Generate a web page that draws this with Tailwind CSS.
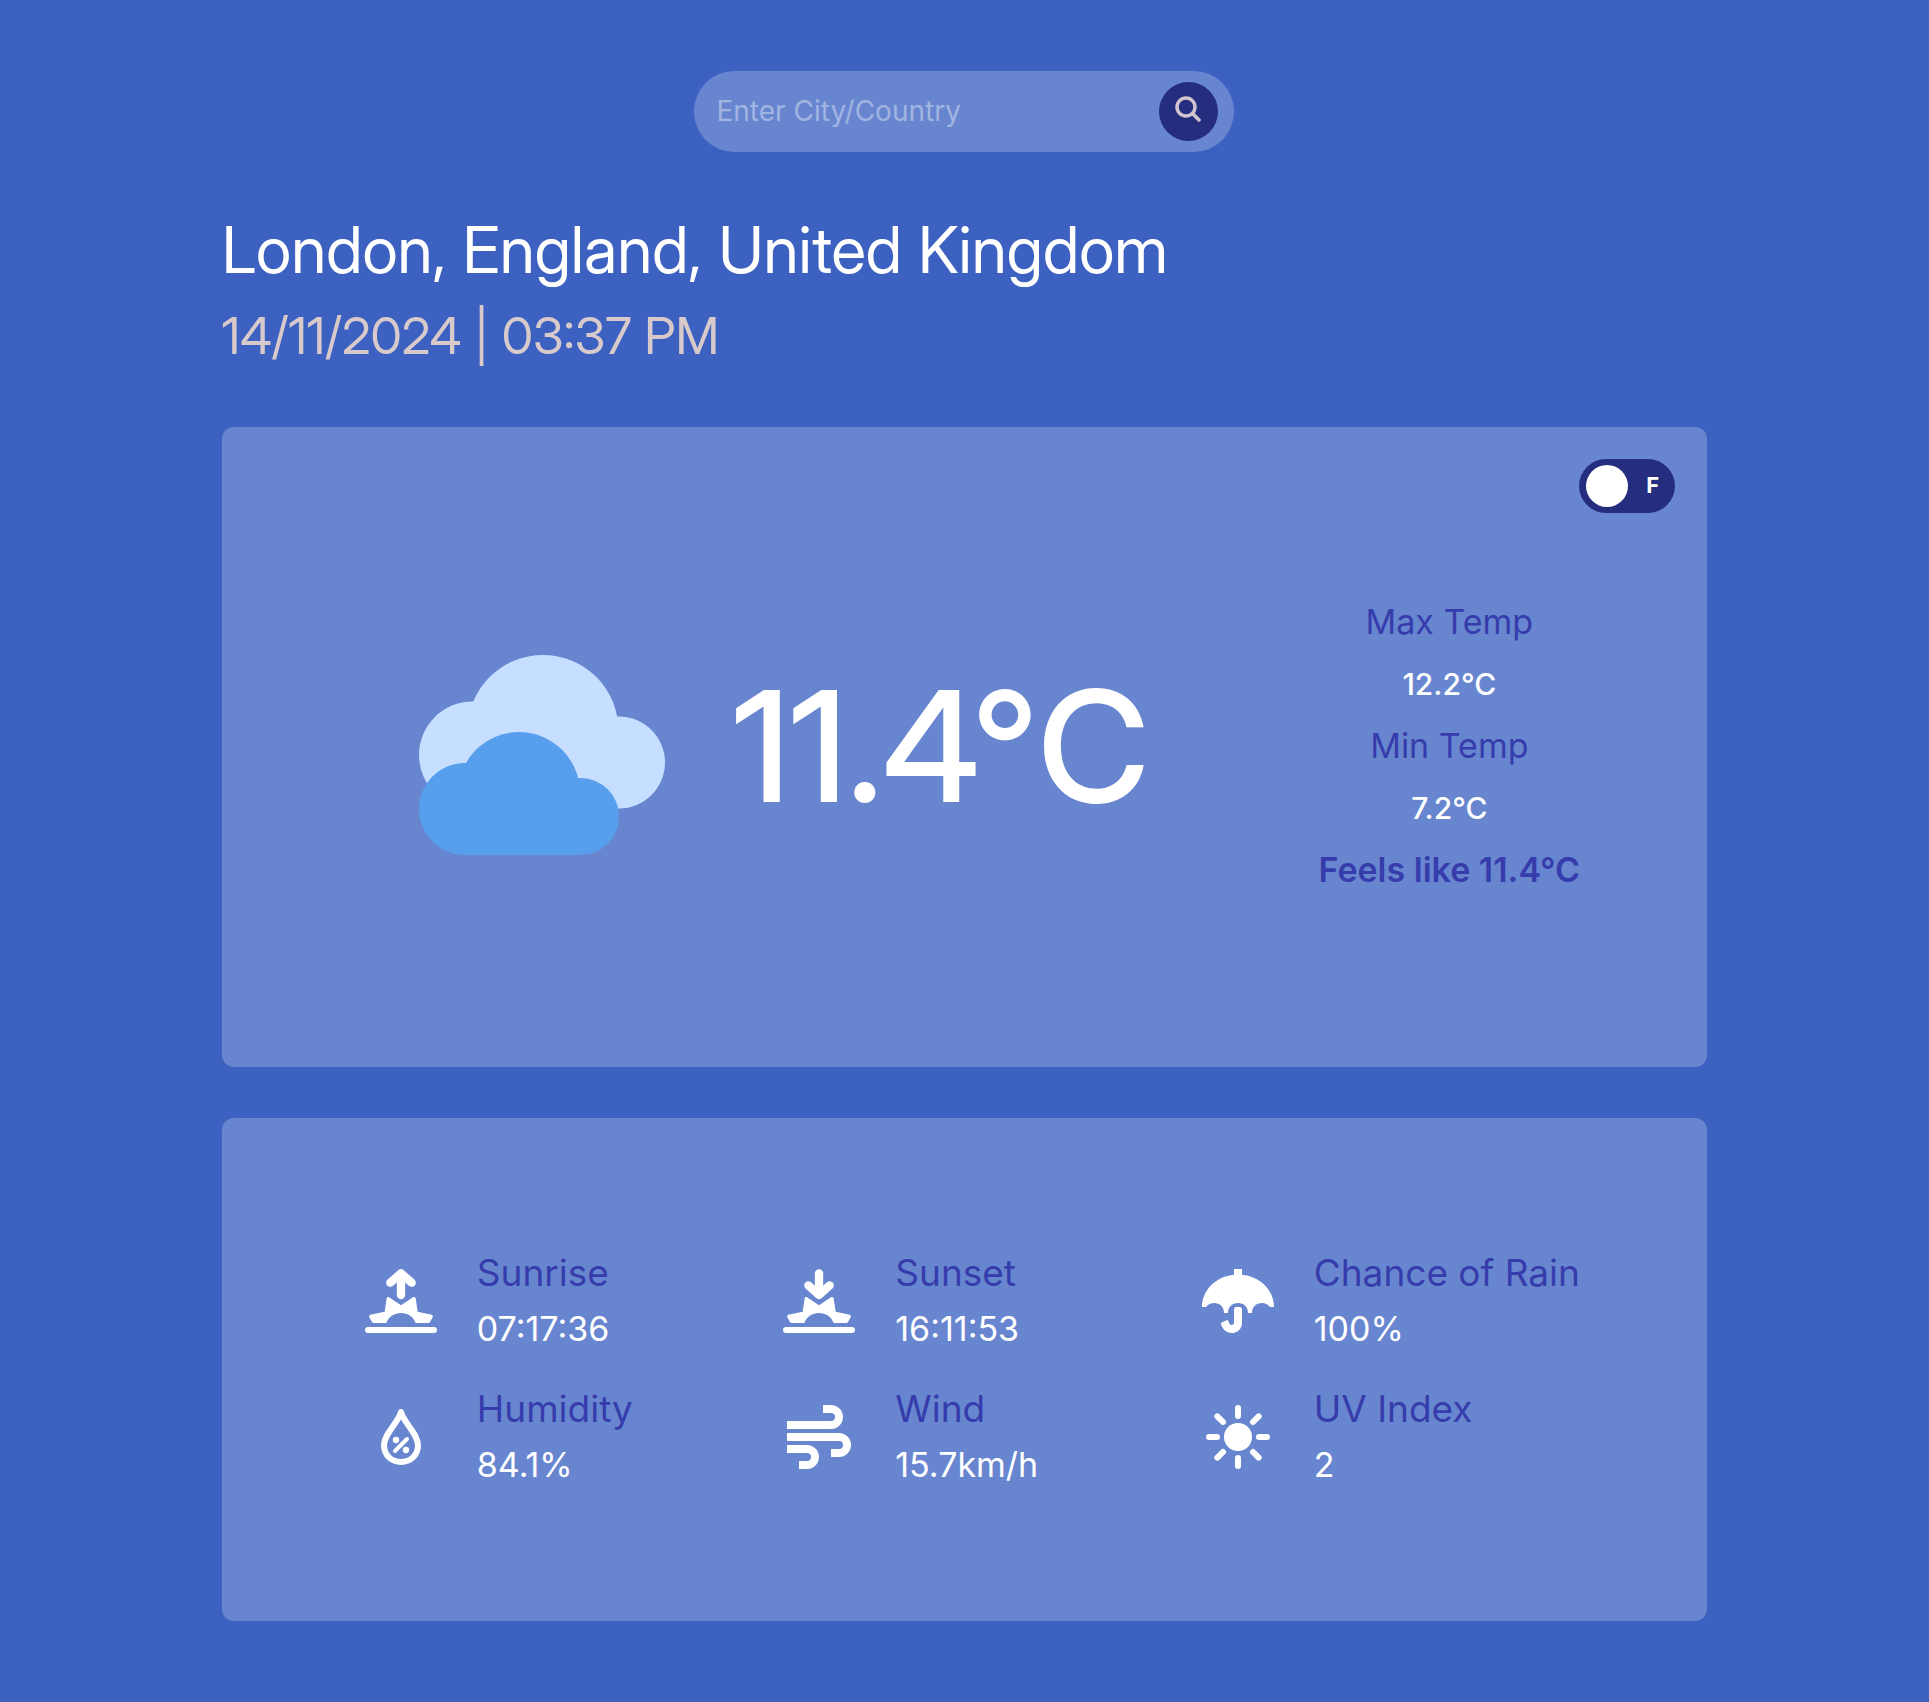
<!DOCTYPE html>
<html lang="en">
<head>
<meta charset="utf-8">
<meta name="viewport" content="width=device-width, initial-scale=1">
<title>Weather</title>
<script src="https://cdn.jsdelivr.net/npm/@tailwindcss/browser@4"></script>
</head>
<body class="min-h-screen bg-[#3d61c1] font-['Inter',sans-serif] text-white">
<main class="mx-auto flex w-[77%] flex-col pt-[71px] pb-20">
  <form class="mx-auto flex h-[81px] w-[540px] items-center rounded-full bg-[#6886cf] pr-4 pl-[22px]" onsubmit="return false">
    <input type="text" aria-label="City or country" placeholder="Enter City/Country" class="min-w-0 flex-1 bg-transparent pb-0.5 text-[28px] text-white outline-none placeholder:text-[#a1b4e2]">
    <button type="submit" aria-label="Search" class="flex size-[59px] items-center justify-center rounded-full bg-[#252d7e] pr-0.5 pb-1.5">
      <svg class="size-[26px]" viewBox="0 0 26 26" fill="none" stroke="#d0c5cf" stroke-width="3.500" stroke-linecap="round" aria-hidden="true"><circle cx="11" cy="11" r="9"/><path d="M17.500 17.500l6.500 6.500"/></svg>
    </button>
  </form>

  <header class="mt-[58px] font-['Inter_Display','Inter',sans-serif]">
    <h1 class="text-[64px] leading-[80px]">London, England, United Kingdom</h1>
    <p class="mt-[14px] text-[51px] leading-[64px] text-[#d8cacb]">14/11/2024 | 03:37 PM</p>
  </header>

  <section aria-label="Current temperature" class="relative mt-[59px] flex min-h-[640px] items-center justify-between rounded-xl bg-[#6886cf] pr-[127px] pl-[197px]">
    <label class="absolute top-8 right-8 flex h-[54px] w-24 cursor-pointer items-center justify-between rounded-full bg-[#252d7e] pr-4 pl-[7px]">
      <input type="checkbox" aria-label="Show Fahrenheit" class="size-[42px] appearance-none rounded-full bg-white">
      <span class="pb-0.5 text-[22px] leading-none font-bold">F</span>
    </label>
    <div class="flex items-center gap-[68px]">
      <svg class="mt-4 h-[200px] w-[246px]" viewBox="19 15.5 246 200" role="img" aria-label="Cloudy">
        <g fill="#c6deff"><circle cx="143" cy="91" r="75.5"/><circle cx="72.5" cy="115.5" r="53.5"/><circle cx="219" cy="123" r="46"/><path d="M72 115H219V169H72z"/></g>
        <g fill="#579fed"><circle cx="119" cy="153.500" r="61"/><circle cx="65" cy="169.500" r="46"/><circle cx="180.500" cy="177" r="38.500"/><path d="M65 160H181V215.500H65z"/></g>
      </svg>
      <p class="pb-0.5 font-['Inter_Display','Inter',sans-serif] text-[154px] leading-none font-medium">11.4°C</p>
    </div>
    <dl class="pb-0.5 text-center text-[34px] leading-[62px] text-[#363cac]">
      <dt>Max Temp</dt>
      <dd class="text-[30px] leading-[62px] font-medium text-white">12.2°C</dd>
      <dt>Min Temp</dt>
      <dd class="text-[30px] leading-[62px] font-medium text-white">7.2°C</dd>
      <div class="font-semibold"><dt class="inline">Feels like</dt> <dd class="inline">11.4°C</dd></div>
    </dl>
  </section>

  <section aria-label="Conditions" class="mt-[51px] flex min-h-[503px] items-center rounded-xl bg-[#6886cf] px-[115px] pb-0.5">
    <dl class="grid w-full grid-cols-3 gap-y-6 text-[37px] leading-[56px] whitespace-nowrap text-[#363cac]">
      <div class="flex items-center gap-10 pl-7">
        <svg class="h-16 w-[72px] shrink-0" viewBox="45 87 216 192" fill="#fff" aria-hidden="true">
          <path d="M104 215L110 175Q111 170 116 171L153 196L190 171Q195 170 197 175L203 215L245 224Q251 227 248 232L240 246Q238 249 235 249H197C190 230 173 219 153 219C133 219 116 230 109 249H71Q68 249 66 246L58 232Q55 227 61 224Z"/>
          <path d="M153 165V104M121 128L153 100L185 128" fill="none" stroke="#fff" stroke-width="25" stroke-linecap="round" stroke-linejoin="round"/>
          <path d="M54 270H252" stroke="#fff" stroke-width="18" stroke-linecap="round"/>
        </svg>
        <div><dt>Sunrise</dt><dd class="text-[34px] leading-[56px] text-white">07:17:36</dd></div>
      </div>
      <div class="flex items-center gap-10 pl-7">
        <svg class="h-16 w-[72px] shrink-0" viewBox="45 87 216 192" fill="#fff" aria-hidden="true">
          <path d="M104 215L110 175Q111 170 116 171L153 196L190 171Q195 170 197 175L203 215L245 224Q251 227 248 232L240 246Q238 249 235 249H197C190 230 173 219 153 219C133 219 116 230 109 249H71Q68 249 66 246L58 232Q55 227 61 224Z"/>
          <path d="M153 100V161M121 136L153 165L185 136" fill="none" stroke="#fff" stroke-width="25" stroke-linecap="round" stroke-linejoin="round"/>
          <path d="M54 270H252" stroke="#fff" stroke-width="18" stroke-linecap="round"/>
        </svg>
        <div><dt>Sunset</dt><dd class="text-[34px] leading-[56px] text-white">16:11:53</dd></div>
      </div>
      <div class="flex items-center gap-10 pl-7">
        <svg class="h-16 w-[72px] shrink-0" viewBox="33 87 216 192" fill="#fff" aria-hidden="true">
          <path d="M129 87h24v17c53 5 96 45 96 97h-12c-6-8-15-12-24-12c-18 0-30 12-30 30h-12c0-18-12-30-30-30s-30 12-30 30h-12c0-18-12-30-30-30c-9 0-18 4-24 12h-12c0-52 43-92 96-97z"/>
          <path d="M129 208Q129 201 136 201H146Q153 201 153 208V248C153 267 139 279 122 279C106 279 94 268 89 249L110 239Q115 255 122 255Q129 255 129 247Z"/>
        </svg>
        <div><dt>Chance of Rain</dt><dd class="text-[34px] leading-[56px] text-white">100%</dd></div>
      </div>
      <div class="flex items-center gap-10 pl-7">
        <svg class="h-16 w-[72px] shrink-0" viewBox="45 495 216 192" fill="none" stroke="#fff" stroke-linecap="round" stroke-linejoin="round" aria-hidden="true">
          <path stroke-width="18" d="M153 516C146 547 102 580 102 616C102 646 125 666 153 666C181 666 204 646 204 616C204 580 160 547 153 516Z"/>
          <path stroke-width="12" d="M135 633L171 597"/>
          <circle cx="138" cy="600" r="9.500" fill="#fff" stroke="none"/><circle cx="168" cy="630" r="9.500" fill="#fff" stroke="none"/>
        </svg>
        <div><dt>Humidity</dt><dd class="text-[34px] leading-[56px] text-white">84.1%</dd></div>
      </div>
      <div class="flex items-center gap-10 pl-7">
        <svg class="h-16 w-[72px] shrink-0" viewBox="39 495 216 192" fill="none" stroke="#fff" stroke-width="24" aria-hidden="true">
          <path d="M51 555H183a24 24 0 0 0 0-48H159M51 591H207a24 24 0 0 1 0 48H183M51 627H111a24 24 0 0 1 0 48H87"/>
        </svg>
        <div><dt>Wind</dt><dd class="text-[34px] leading-[56px] text-white">15.7km/h</dd></div>
      </div>
      <div class="flex items-center gap-10 pl-7">
        <svg class="h-16 w-[72px] shrink-0" viewBox="33 495 216 192" fill="none" stroke="#fff" stroke-width="18" stroke-linecap="round" aria-hidden="true">
          <circle cx="141" cy="591" r="42" fill="#fff" stroke="none"/>
          <path d="M141 504V528M141 654V678M54 591H78M204 591H228M79 529L96 546M186 636L203 653M79 653L96 636M186 546L203 529"/>
        </svg>
        <div><dt>UV Index</dt><dd class="text-[34px] leading-[56px] text-white">2</dd></div>
      </div>
    </dl>
  </section>
</main>
</body>
</html>
